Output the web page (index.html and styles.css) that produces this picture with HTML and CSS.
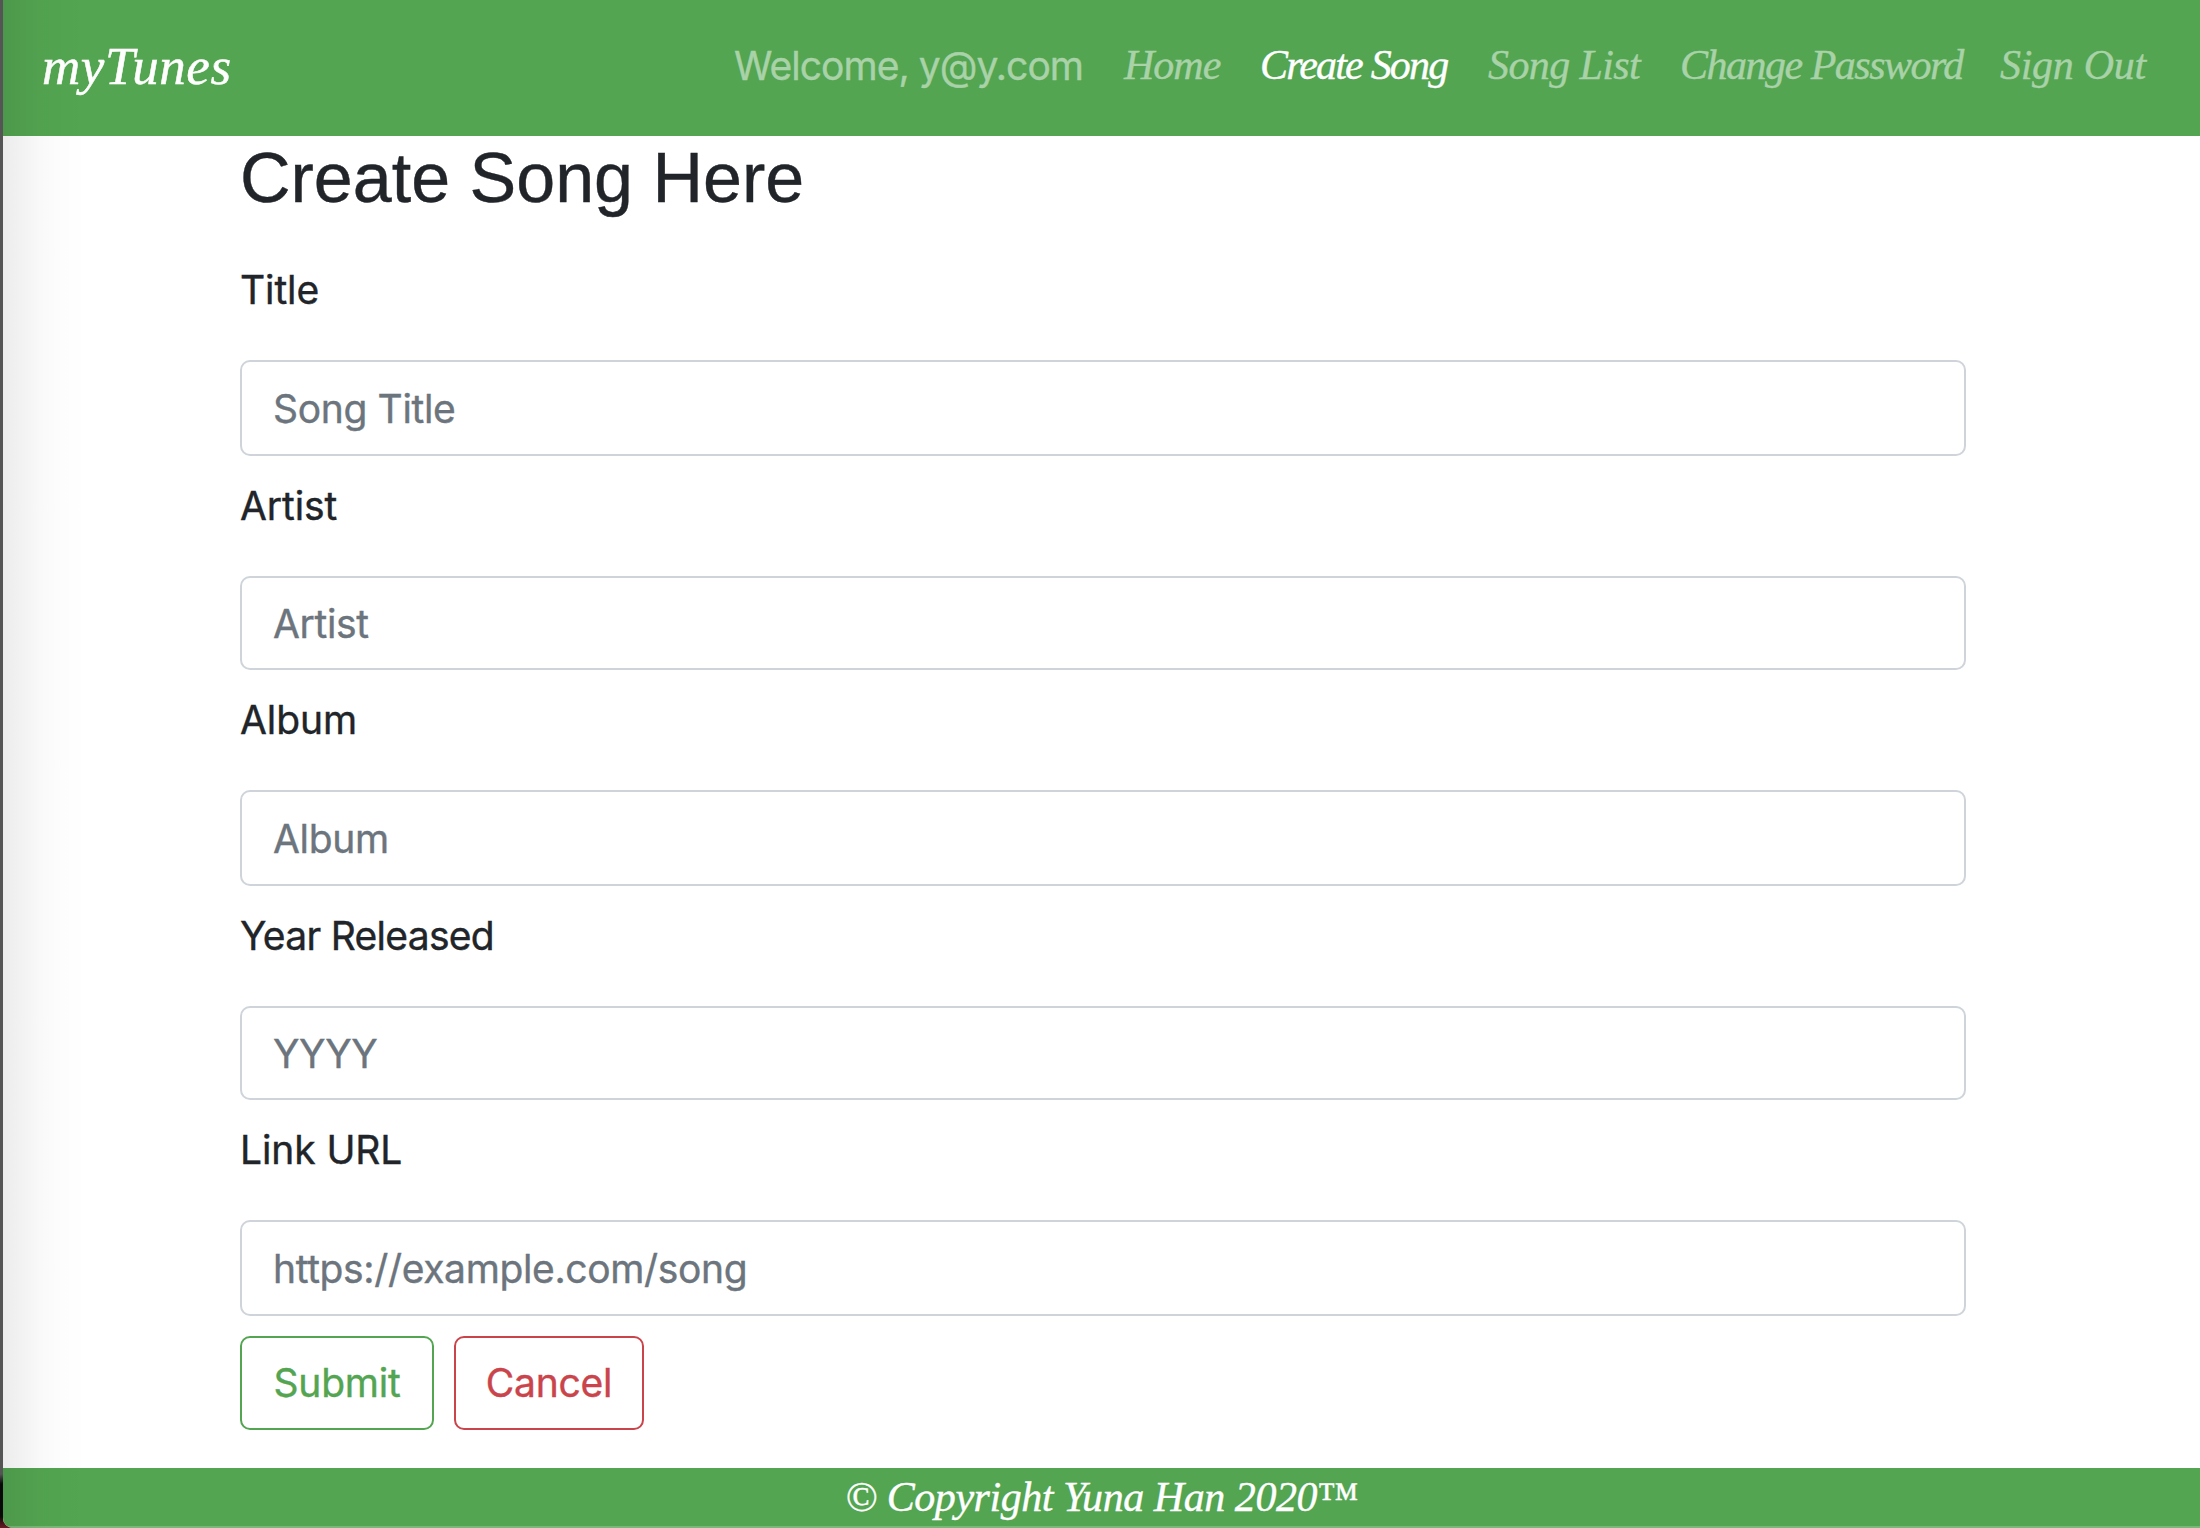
FILE: index.html
```html
<!DOCTYPE html>
<html lang="en">
<head>
<meta charset="utf-8">
<title>myTunes</title>
<link rel="stylesheet" href="styles.css">
</head>
<body>
<div class="window">
  <header class="navbar">
    <a class="brand">myTunes</a>
    <nav class="nav">
      <span class="welcome">Welcome, y@y.com</span>
      <a class="link home">Home</a>
      <a class="link create active">Create Song</a>
      <a class="link list">Song List</a>
      <a class="link password">Change Password</a>
      <a class="link signout">Sign Out</a>
    </nav>
  </header>
  <main class="content">
    <h1 class="heading">Create Song Here</h1>
    <form>
      <div class="field"><label class="label" for="title">Title</label><input class="input tall" id="title" placeholder="Song Title"></div>
      <div class="field"><label class="label" for="artist">Artist</label><input class="input" id="artist" placeholder="Artist"></div>
      <div class="field"><label class="label" for="album">Album</label><input class="input tall" id="album" placeholder="Album"></div>
      <div class="field"><label class="label year" for="year">Year Released</label><input class="input" id="year" placeholder="YYYY"></div>
      <div class="field"><label class="label" for="link">Link URL</label><input class="input tall" id="link" placeholder="https://example.com/song"></div>
      <div class="actions">
        <button class="button submit" type="button">Submit</button>
        <button class="button cancel" type="button">Cancel</button>
      </div>
    </form>
  </main>
  <footer class="footer">© Copyright Yuna Han 2020™</footer>
</div>
</body>
</html>
```
FILE: styles.css
```css
* { box-sizing: border-box; }

body {
  margin: 0;
  height: 1528px;
  padding-left: 3px;
  overflow: hidden;
  background: linear-gradient(#555 0, #555 1474px, #090909 1484px, #090909 1516px, #6b1a22 1528px);
  font-family: Inter, "Liberation Sans", sans-serif;
  font-size: 39px;
  color: #212529;
  -webkit-text-stroke: .4px;
}

.window {
  position: relative;
  display: flex;
  flex-direction: column;
  height: 1528px;
  background: #fff;
  border-bottom-left-radius: 10px;
  overflow: hidden;
}

/* soft shade along the window's left edge */
.window::after {
  content: "";
  position: absolute;
  inset: 0 auto 0 0;
  width: 84px;
  background: linear-gradient(90deg, rgba(0,0,0,.075), rgba(0,0,0,.055) 18%, rgba(0,0,0,.022) 45%, rgba(0,0,0,.006) 72%, transparent);
  pointer-events: none;
}

.navbar {
  display: flex;
  justify-content: space-between;
  height: 136px;
  padding: 0 53px 0 39px;
  background: #53a551;
  font-family: "Apple Chancery", "Liberation Serif", serif;
  font-style: italic;
  line-height: 132px;
  white-space: nowrap;
}

.brand {
  font-size: 53px;
  letter-spacing: .6px;
  color: #fff;
  -webkit-text-stroke: .5px;
}

.nav {
  display: grid;
  grid-template-columns: 350px 96px 188px 152px 280px 147px;
  column-gap: 40px;
  color: #a9d2a8;
}

.welcome {
  font-family: Inter, "Liberation Sans", sans-serif;
  font-style: normal;
  letter-spacing: -.95px;
}

.link {
  font-size: 42px;
  line-height: 130px;
}
.home { letter-spacing: -1px; }
.create { letter-spacing: -1.8px; }
.list { letter-spacing: -.6px; }
.password { letter-spacing: -1.5px; }
.signout { letter-spacing: -.3px; }
.active { color: #fff; }

.content {
  flex: 1;
  width: 1726px;
  margin-left: 237px;
}

.heading {
  margin: 0 0 40px;
  font: 400 70px/84px "Liberation Sans", sans-serif;
}

.field { margin-bottom: 20px; }

.label {
  display: block;
  margin-bottom: 40px;
  line-height: 60px;
  letter-spacing: -.1px;
}
.year { letter-spacing: -.7px; }

.input {
  display: block;
  width: 100%;
  height: 94px;
  padding: 0 31px;
  border: 2px solid #ced4da;
  border-radius: 10px;
  background: transparent;
  font: inherit;
  letter-spacing: -.35px;
  -webkit-text-stroke: inherit;
}
.tall { height: 96px; }
.input::placeholder { color: #6c757d; opacity: 1; }

.actions { display: flex; gap: 20px; }

.button {
  height: 94px;
  padding: 0 0 2px;
  border: 2px solid;
  border-radius: 10px;
  background: transparent;
  font: inherit;
  letter-spacing: -.25px;
}
.submit { width: 194px; color: #53a551; }
.cancel { width: 190px; color: #ca444b; }

.footer {
  height: 60px;
  border-bottom: 2px solid #79b878;
  background: #53a551;
  color: #fff;
  font: italic 42px/59px "Apple Chancery", "Liberation Serif", serif;
  letter-spacing: -.45px;
  text-align: center;
}
```
